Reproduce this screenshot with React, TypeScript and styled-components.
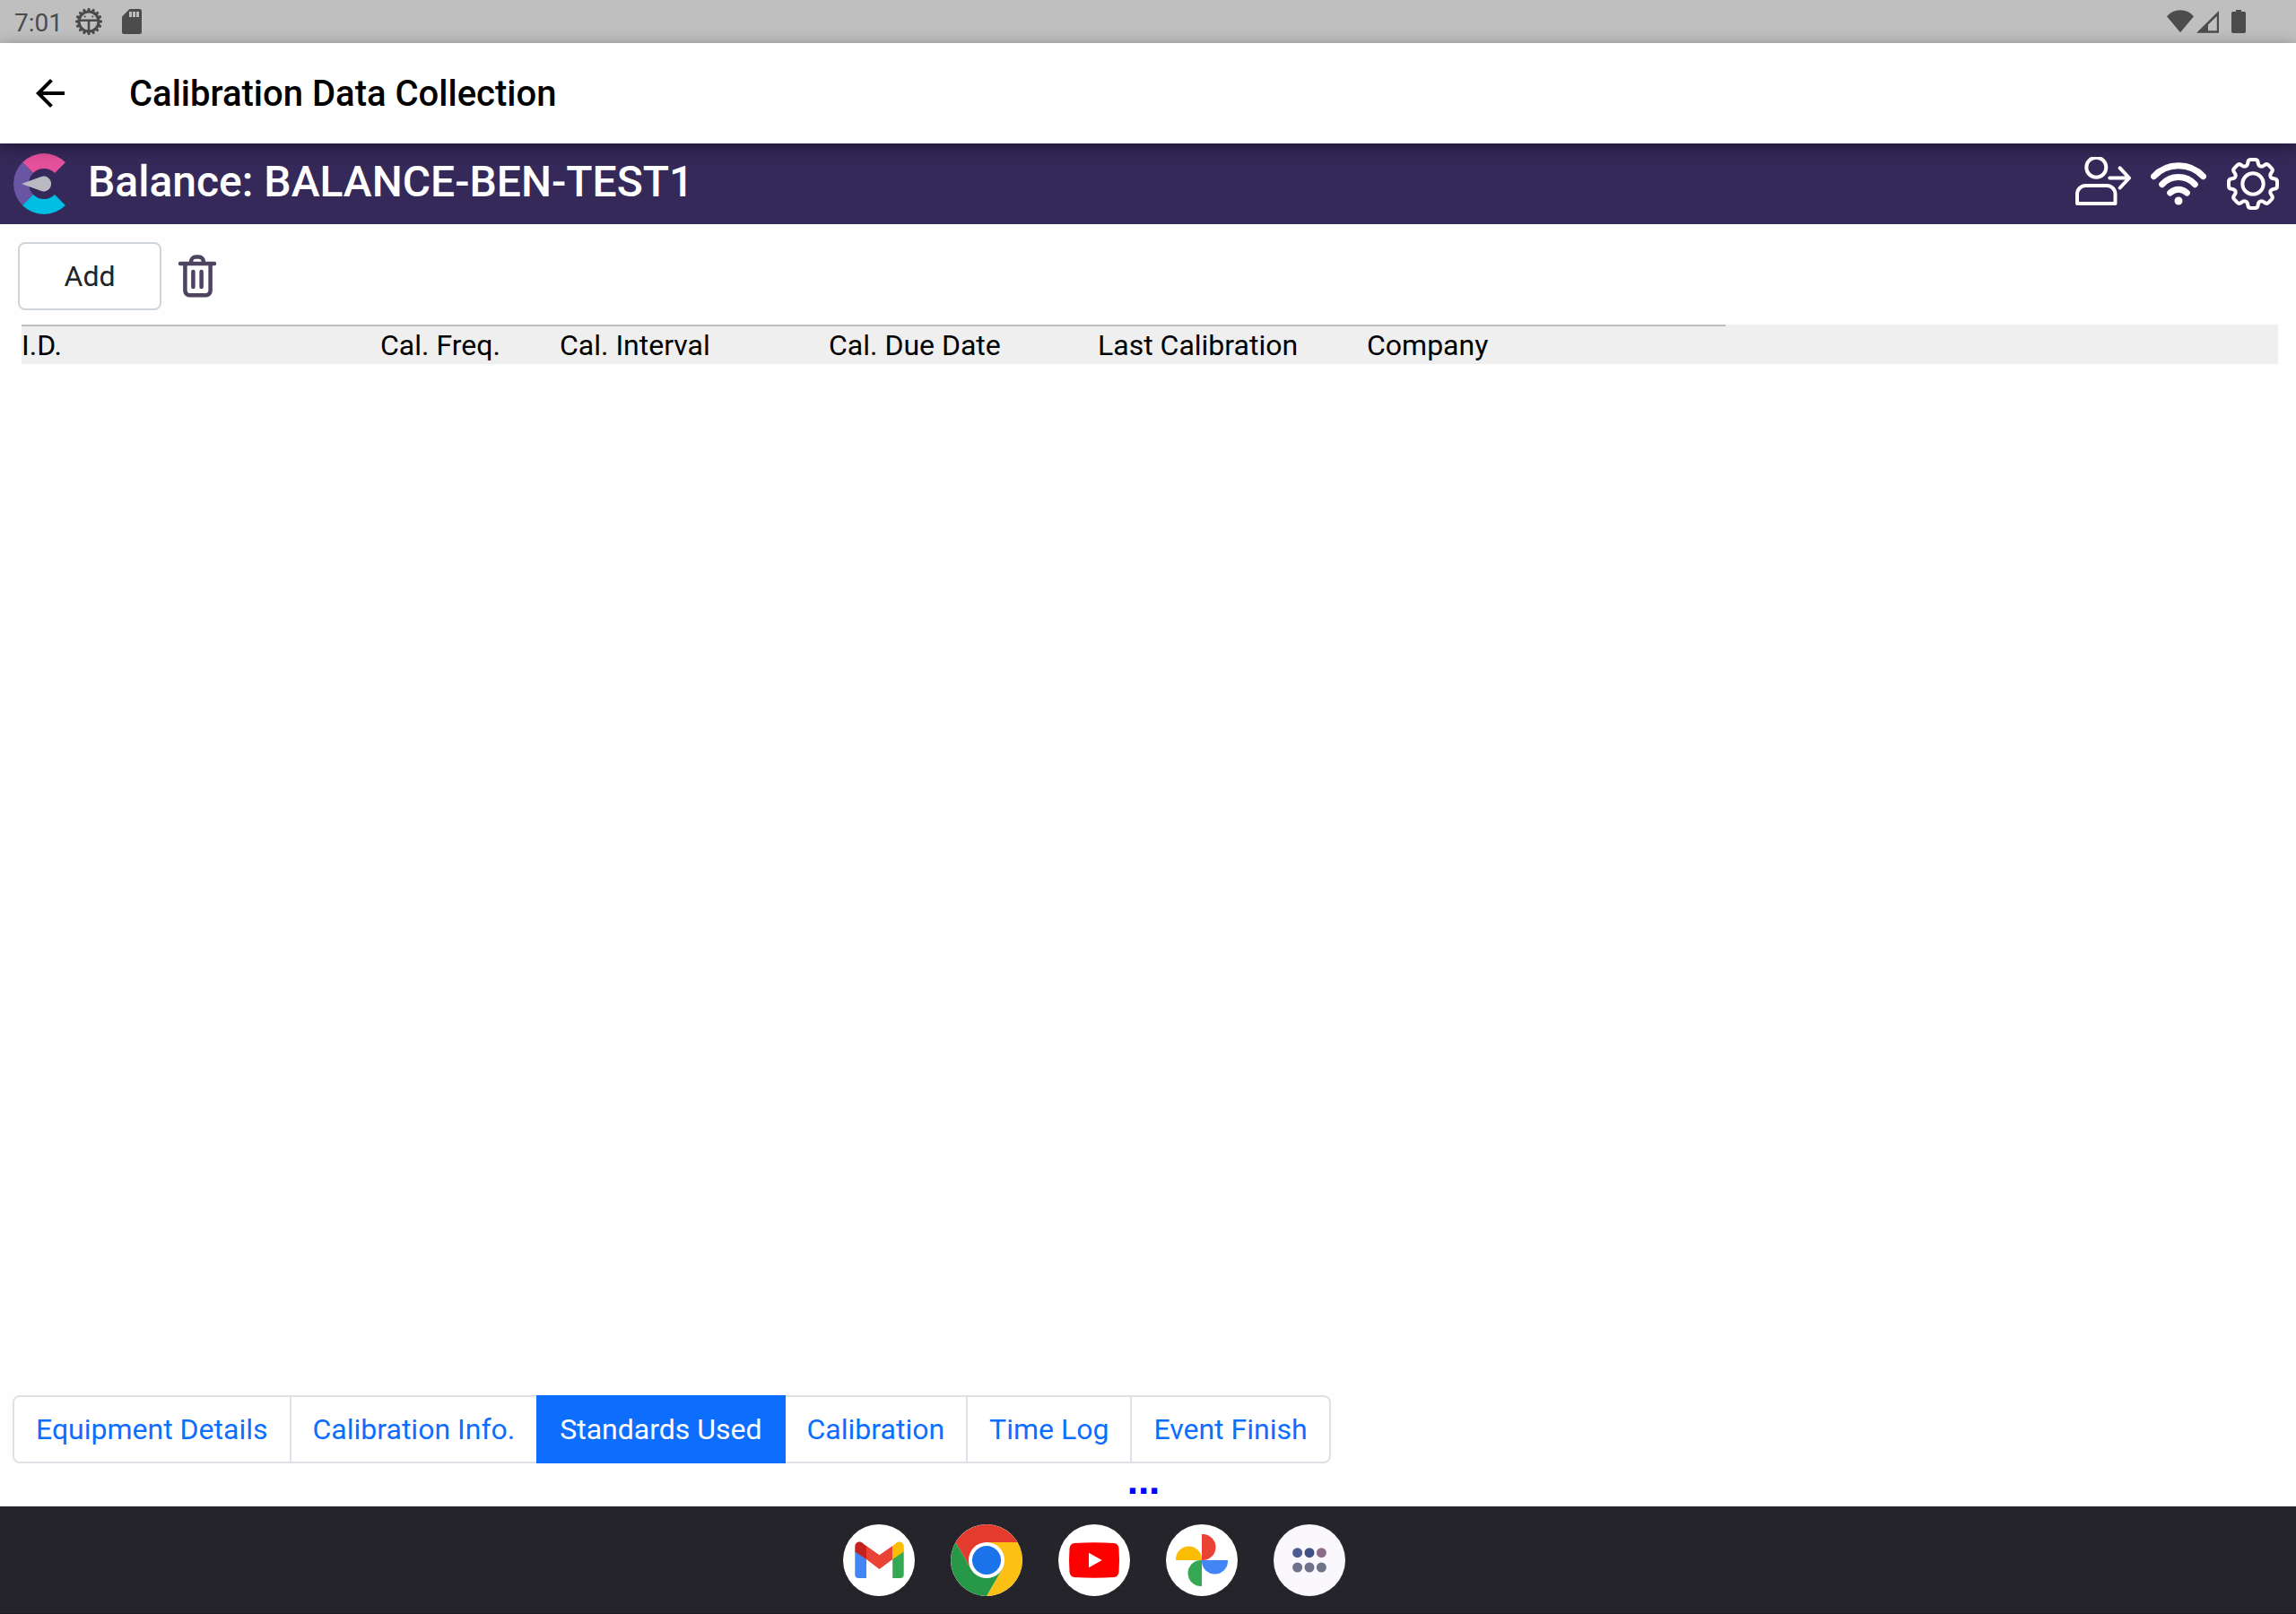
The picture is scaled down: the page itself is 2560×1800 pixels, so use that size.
import React from "react";
import styled, { createGlobalStyle } from "styled-components";

const GlobalStyle = createGlobalStyle`
  *, *::before, *::after { box-sizing: border-box; }
  body {
    margin: 0;
    background: #fefefe;
    color: #000;
    font-family: Roboto, "Liberation Sans", sans-serif;
    font-size: 32px;
  }
  h1, h2 { margin: 0; font-weight: 500; }
  button { font: inherit; cursor: pointer; }
  svg { display: block; flex: none; }
`;

const Page = styled.div`
  display: flex;
  flex-direction: column;
  min-height: 100vh;
`;

const StatusBar = styled.div`
  display: flex;
  align-items: center;
  justify-content: space-between;
  height: 48px;
  padding: 0 56px 0 16px;
  background: #bfbfbf;
  color: #4c4c4c;
  font-size: 28px;
`;

const StatusGroup = styled.div<{ $gap: number }>`
  display: flex;
  align-items: center;
  gap: ${(p) => p.$gap}px;
`;

const Clock = styled.time`
  line-height: 32px;
  padding-top: 3px;
  margin-right: -8px;
`;

const TitleBar = styled.header`
  position: relative;
  display: flex;
  align-items: center;
  gap: 64px;
  height: 112px;
  padding: 0 32px;
  background: #fff;
  box-shadow: 0 4px 16px rgba(0, 0, 0, 0.42);
`;

const IconButton = styled.button`
  display: flex;
  padding: 0;
  border: 0;
  background: none;
  color: inherit;
`;

const Title = styled.h1`
  padding-top: 2px;
  font-size: 40px;
  line-height: 48px;
`;

const EquipmentBar = styled.div`
  display: flex;
  align-items: center;
  justify-content: space-between;
  height: 90px;
  padding: 0 18px 0 14px;
  background: #352959;
  color: #fff;
`;

const Brand = styled.div`
  display: flex;
  align-items: center;
  gap: 14px;
`;

const EquipmentName = styled.h2`
  font-size: 48px;
  line-height: 56px;
  padding-bottom: 4px;
`;

const Actions = styled.div`
  display: flex;
  align-items: center;
  gap: 22px;
`;

const Main = styled.main`
  flex: 1;
  display: flex;
  flex-direction: column;
`;

const Toolbar = styled.div`
  display: flex;
  align-items: center;
  gap: 16px;
  padding: 20px 20px 16px;
`;

const AddButton = styled.button`
  width: 160px;
  height: 76px;
  border: 2px solid #ced4da;
  border-radius: 8px;
  background: #fff;
  color: #212529;
`;

const TableWrap = styled.div`
  margin: 0 20px 0 24px;
  background: #efefef;
`;

const Table = styled.table`
  table-layout: fixed;
  width: 1900px;
  border-collapse: separate;
  border-spacing: 0;
`;

const HeadCell = styled.th<{ $width: number }>`
  width: ${(p) => p.$width}px;
  height: 44px;
  padding: 0;
  border-top: 2px solid #bdbdbd;
  font-weight: 400;
  line-height: 40px;
  text-align: left;
  white-space: nowrap;
`;

const Tabs = styled.nav`
  display: flex;
  padding: 0 14px;
`;

const Tab = styled.a<{ $active?: boolean }>`
  display: block;
  height: 76px;
  padding: 0 24px;
  border: 2px solid ${(p) => (p.$active ? "#0d6efd" : "#dee2e6")};
  background: ${(p) => (p.$active ? "#0d6efd" : "#fff")};
  color: ${(p) => (p.$active ? "#fff" : "#0d6efd")};
  position: relative;
  z-index: ${(p) => (p.$active ? 1 : 0)};
  line-height: 72px;
  text-decoration: none;
  white-space: nowrap;

  & + & { margin-left: -2px; }
  &:first-child { border-radius: 8px 0 0 8px; }
  &:last-child { border-radius: 0 8px 8px 0; }
`;

const MoreRow = styled.div`
  display: flex;
  justify-content: center;
  height: 48px;
  padding-right: 10px;
`;

const MoreLink = styled.a`
  color: #0000ff;
  font-family: "Liberation Sans", Arial, sans-serif;
  font-size: 44px;
  font-weight: 700;
  line-height: 38px;
  text-decoration: none;
`;

const Dock = styled.footer`
  display: flex;
  align-items: center;
  justify-content: center;
  gap: 40px;
  height: 120px;
  padding-right: 120px;
  background: #25242a;
  border-bottom: 1px solid #1c1b20;
`;

const DockButton = styled.button<{ $bg: string }>`
  width: 80px;
  height: 80px;
  padding: 0;
  border: 0;
  border-radius: 50%;
  overflow: hidden;
  background: ${(p) => p.$bg};
`;

const columns = [
  { label: "I.D.", width: 400 },
  { label: "Cal. Freq.", width: 200 },
  { label: "Cal. Interval", width: 300 },
  { label: "Cal. Due Date", width: 300 },
  { label: "Last Calibration", width: 300 },
  { label: "Company", width: 400 },
];

const tabs = [
  "Equipment Details",
  "Calibration Info.",
  "Standards Used",
  "Calibration",
  "Time Log",
  "Event Finish",
];

const rotate = (x: number, y: number, deg: number) => {
  const a = (deg * Math.PI) / 180;
  return `${(x * Math.cos(a) - y * Math.sin(a)).toFixed(2)} ${(x * Math.sin(a) + y * Math.cos(a)).toFixed(2)}`;
};

/* One tooth, drawn pointing up, repeated eight times round the hub. */
const gearPath =
  Array.from({ length: 8 }, (_, i) => {
    const r = (x: number, y: number) => rotate(x, y, i * 45);
    return (
      `${i === 0 ? "M" : "L"}${r(-8.1, -19.6)}` +
      `C${r(-6.6, -20.2)} ${r(-5.9, -21.5)} ${r(-5.7, -23.5)}` +
      `Q${r(-5.4, -27)} ${r(-2.4, -27)}L${r(2.4, -27)}` +
      `Q${r(5.4, -27)} ${r(5.7, -23.5)}` +
      `C${r(5.9, -21.5)} ${r(6.6, -20.2)} ${r(8.1, -19.6)}`
    );
  }).join("") + "Z";

const DebugIcon = () => (
  <svg width="30" height="30" viewBox="-15 -15 30 30" fill="none" stroke="currentColor">
    <circle r="10.8" strokeWidth="2.8" />
    {Array.from({ length: 16 }, (_, i) => (
      <path key={i} d="M-2.2-11.5-1-15H1L2.2-11.5Z" fill="currentColor" stroke="none" transform={`rotate(${i * 22.5})`} />
    ))}
    <path d="M-10.5-1.2H10.5M0-1V11" strokeWidth="2.6" />
    <circle cx="-4.3" cy="-5.5" r="1.1" fill="currentColor" stroke="none" />
    <circle cx="4.3" cy="-5.5" r="1.1" fill="currentColor" stroke="none" />
  </svg>
);

const SdCardIcon = () => (
  <svg width="22" height="28" viewBox="0 0 22 28">
    <path d="M8.5 0H19.5A2.5 2.5 0 0 1 22 2.5V25.5A2.5 2.5 0 0 1 19.5 28H2.5A2.5 2.5 0 0 1 0 25.5V8.5Z" fill="currentColor" />
    <path d="M8 3h3v6H8zM12 3h3v6h-3zM16 3h3v6h-3z" fill="#bfbfbf" />
  </svg>
);

const SignalIcons = () => (
  <svg width="88" height="28" viewBox="0 0 88 28" fill="currentColor">
    <path d="M0 8.2Q6 1.3 15 1.3T30 8.2L15 26.3Z" />
    <path fillRule="evenodd" d="M33 26.7 58 2V26.7ZM46 24.3H55.8V8L46 17.4Z" />
    <path d="M77 1h6v2h3.5a1.5 1.5 0 0 1 1.5 1.5V25a2 2 0 0 1-2 2H74a2 2 0 0 1-2-2V4.5a1.5 1.5 0 0 1 1.5-1.5H77Z" />
  </svg>
);

const BackIcon = () => (
  <svg width="48" height="48" viewBox="0 0 24 24" fill="currentColor">
    <path d="M20 11H7.83l5.59-5.59L12 4l-8 8 8 8 1.41-1.41L7.83 13H20v-2z" />
  </svg>
);

const Logo = () => (
  <svg width="70" height="70" viewBox="-35 -35 70 70">
    <path d="M-24-24A34 34 0 0 1 24-24L12-12A17 17 0 0 0-12-12Z" fill="#e4509b" />
    <path d="M-24-24A34 34 0 0 0-24 24L-12 12A17 17 0 0 1-12-12Z" fill="#6855a3" />
    <path d="M-24 24A34 34 0 0 0 24 24L12 12A17 17 0 0 1-12 12Z" fill="#00bde3" />
    <path d="M-25 0-3-8.1A8.5 8.5 0 1 1-3 8.1Z" fill="#b9b9c1" />
  </svg>
);

const SwitchUserIcon = () => (
  <svg width="62" height="60" viewBox="0 0 62 60" fill="none" stroke="currentColor" strokeWidth="4" strokeLinecap="round" strokeLinejoin="round">
    <circle cx="23.3" cy="11.7" r="11" />
    <path d="M2 52V41.5A9.5 9.5 0 0 1 11.5 32H35A9.5 9.5 0 0 1 44.5 41.5V52Z" />
    <path d="M38.3 23.5H59.5M49.7 12.3 60 23.5 49.7 34.5" />
  </svg>
);

const WifiIcon = () => (
  <svg width="62" height="50" viewBox="0 0 62 50" fill="none" stroke="currentColor" strokeWidth="7" strokeLinecap="round">
    <path d="M3.6 16.6A37.7 37.7 0 0 1 58.4 16.6" />
    <path d="M12.7 25.7A24.7 24.7 0 0 1 49.3 25.7" />
    <path d="M21.7 35A13.5 13.5 0 0 1 40.3 35" />
    <circle cx="31" cy="44" r="4.5" fill="currentColor" stroke="none" />
  </svg>
);

const GearIcon = () => (
  <svg width="60" height="60" viewBox="-30 -30 60 60" fill="none" stroke="currentColor" strokeWidth="4" strokeLinejoin="round">
    <path d={gearPath} />
    <circle r="11.7" />
  </svg>
);

const TrashIcon = () => (
  <svg width="48" height="48" viewBox="0 0 48 48" fill="none" stroke="#4e4462" strokeWidth="4.5" strokeLinecap="round">
    <path d="M5 10H43M10.4 10V40A5 5 0 0 0 15.4 45.2H33.6A5 5 0 0 0 38.6 40V10M19.4 19V36M28.6 19V36M17 10V8A5.5 5.5 0 0 1 22.5 2.5H25.5A5.5 5.5 0 0 1 31 8V10" />
  </svg>
);

const GmailIcon = () => (
  <svg width="80" height="80" viewBox="0 0 80 80">
    <path d="M13.3 29 26 38.5V60H17.3A4 4 0 0 1 13.3 56Z" fill="#4285f4" />
    <path d="M67.7 29 55.2 38.5V60H63.7A4 4 0 0 0 67.7 56Z" fill="#34a853" />
    <path d="M26 24 40.5 34.3 55.2 24V39L40.5 50 26 39Z" fill="#ea4335" />
    <path d="M26 24.2V39L13.3 30.5V25C13.3 20 18.5 17.7 22.5 21.5Z" fill="#c5221f" />
    <path d="M55.2 24.2V39L67.7 30.5V25C67.7 20 62.5 17.7 58.5 21.5Z" fill="#fbbc04" />
  </svg>
);

const ChromeIcon = () => (
  <svg width="80" height="80" viewBox="0 0 80 80">
    <path d="M5.4 20A40 40 0 0 1 74.6 20H40L22.7 50Z" fill="#e33b2e" />
    <path d="M74.6 20A40 40 0 0 1 40 80L57.3 50 40 20Z" fill="#fcc015" />
    <path d="M5.4 20A40 40 0 0 0 40 80L57.3 50H22.7Z" fill="#279847" />
    <circle cx="40" cy="40" r="20" fill="#fff" />
    <circle cx="40" cy="40" r="16" fill="#1a73e8" />
  </svg>
);

const YouTubeIcon = () => (
  <svg width="80" height="80" viewBox="0 0 80 80">
    <path d="M18 21Q40 19.6 62 21 67 21.5 67.5 27 68.5 40 67.5 53 67 58.5 62 59 40 60.4 18 59 13 58.5 12.5 53 11.5 40 12.5 27 13 21.5 18 21Z" fill="#f00" />
    <path d="M34 31.7 48.7 40 34 48.2Z" fill="#fff" />
  </svg>
);

const petal = "M40 40V11H41A14.5 14.5 0 0 1 41 40Z";

const PhotosIcon = () => (
  <svg width="80" height="80" viewBox="0 0 80 80">
    <path d={petal} fill="#ea4335" />
    <path d={petal} fill="#4285f4" transform="rotate(90 40 40)" />
    <path d={petal} fill="#34a853" transform="rotate(180 40 40)" />
    <path d={petal} fill="#fbbc04" transform="rotate(270 40 40)" />
  </svg>
);

const AppsIcon = () => (
  <svg width="80" height="80" viewBox="0 0 80 80" fill="#6f7389">
    <circle cx="26.6" cy="31.7" r="5.5" fill="#4c5d93" />
    <circle cx="40" cy="31.7" r="5.5" fill="#3f5185" />
    <circle cx="53.4" cy="31.7" r="5.5" fill="#8c6a8a" />
    <circle cx="26.6" cy="48" r="5.5" />
    <circle cx="40" cy="48" r="5.5" />
    <circle cx="53.4" cy="48" r="5.5" />
  </svg>
);

const apps = [
  { name: "Gmail", Icon: GmailIcon, bg: "#fff" },
  { name: "Chrome", Icon: ChromeIcon, bg: "#fff" },
  { name: "YouTube", Icon: YouTubeIcon, bg: "#fff" },
  { name: "Photos", Icon: PhotosIcon, bg: "#fff" },
  { name: "All apps", Icon: AppsIcon, bg: "#faf8fd" },
];

export default function App() {
  return (
    <Page>
      <GlobalStyle />
      <StatusBar>
        <StatusGroup $gap={22}>
          <Clock>7:01</Clock>
          <DebugIcon />
          <SdCardIcon />
        </StatusGroup>
        <SignalIcons />
      </StatusBar>
      <TitleBar>
        <IconButton aria-label="Back">
          <BackIcon />
        </IconButton>
        <Title>Calibration Data Collection</Title>
      </TitleBar>
      <EquipmentBar>
        <Brand>
          <Logo />
          <EquipmentName>Balance: BALANCE-BEN-TEST1</EquipmentName>
        </Brand>
        <Actions>
          <IconButton aria-label="Switch user">
            <SwitchUserIcon />
          </IconButton>
          <IconButton aria-label="Connection">
            <WifiIcon />
          </IconButton>
          <IconButton aria-label="Settings">
            <GearIcon />
          </IconButton>
        </Actions>
      </EquipmentBar>
      <Main>
        <Toolbar>
          <AddButton>Add</AddButton>
          <IconButton aria-label="Delete">
            <TrashIcon />
          </IconButton>
        </Toolbar>
        <TableWrap>
          <Table>
            <thead>
              <tr>
                {columns.map((c) => (
                  <HeadCell key={c.label} $width={c.width} scope="col">
                    {c.label}
                  </HeadCell>
                ))}
              </tr>
            </thead>
          </Table>
        </TableWrap>
      </Main>
      <Tabs>
        {tabs.map((t) => (
          <Tab key={t} href="#" $active={t === "Standards Used"}>
            {t}
          </Tab>
        ))}
      </Tabs>
      <MoreRow>
        <MoreLink href="#">...</MoreLink>
      </MoreRow>
      <Dock>
        {apps.map(({ name, Icon, bg }) => (
          <DockButton key={name} $bg={bg} aria-label={name}>
            <Icon />
          </DockButton>
        ))}
      </Dock>
    </Page>
  );
}
